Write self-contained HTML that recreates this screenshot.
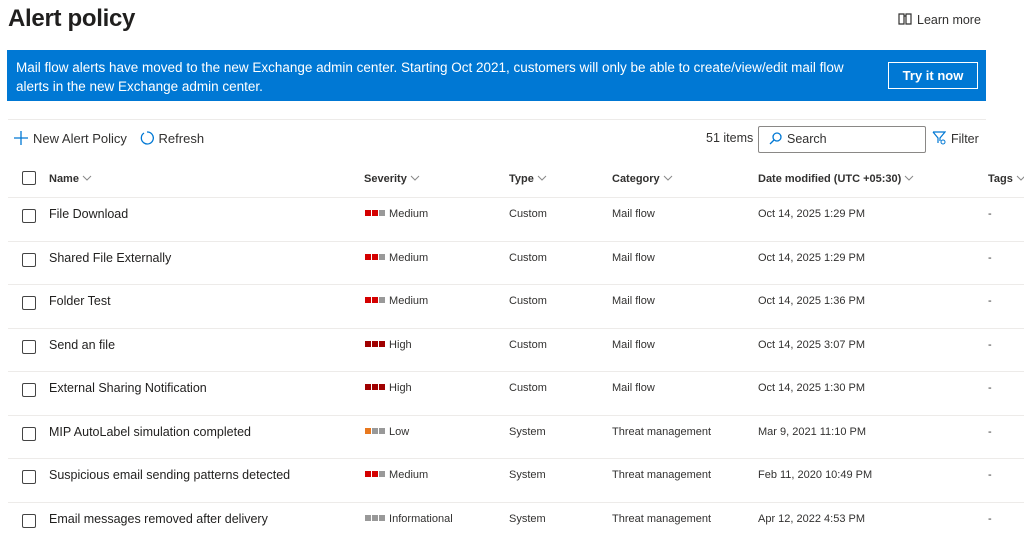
<!DOCTYPE html>
<html><head><meta charset="utf-8"><style>
body{margin:0;width:1024px;height:541px;overflow:hidden;background:#fff;font-family:"Liberation Sans",sans-serif;color:#323130;position:relative}
.a{position:absolute;white-space:nowrap}
h1{position:absolute;left:8px;top:5px;margin:0;font-size:24px;font-weight:bold;color:#201f1e;letter-spacing:-0.3px}
.banner{position:absolute;left:7px;top:50px;width:979px;height:51px;background:#0078d4;color:#fff;font-size:13.5px;line-height:19px}
.btn{position:absolute;left:881px;top:12px;width:90px;height:27px;border:1px solid #fff;box-sizing:border-box;font-weight:bold;font-size:13px;text-align:center;line-height:25px}
.cb{position:absolute;left:22px;width:12px;height:12px;border:1px solid #444;border-radius:2px}
.hd{font-size:11px;font-weight:bold;color:#323130}
.row{position:absolute;left:8px;right:0;height:1px;background:#edebe9}
.nm{font-size:12.5px;color:#201f1e}
.sm{font-size:11px;color:#323130}
.sq{display:inline-block;width:6px;height:6px;margin-right:1px;vertical-align:1px}
.chev{display:inline-block;margin-left:3px;vertical-align:1px}
</style></head><body>
<h1>Alert policy</h1>
<div class="a" style="left:898px;top:13px;font-size:12.5px;color:#323130">
<svg width="14" height="12" viewBox="0 0 14 12" style="vertical-align:-1px;margin-right:5px"><path d="M1 1h5v10H1zM8 1h5v10H8zM6 3h2" fill="none" stroke="#323130" stroke-width="1.2"/></svg>Learn more</div>
<div class="banner"><div style="position:absolute;left:9px;top:8px">Mail flow alerts have moved to the new Exchange admin center. Starting Oct 2021, customers will only be able to create/view/edit mail flow<br>alerts in the new Exchange admin center.</div><div class="btn">Try it now</div></div>
<div class="row" style="top:119px;right:38px"></div>
<div class="a" style="left:14px;top:131px;font-size:13px">
<svg width="14" height="14" viewBox="0 0 14 14" style="vertical-align:-2px;margin-right:5px"><path d="M7 0v14M0 7h14" stroke="#0078d4" stroke-width="1.3"/></svg>New Alert Policy
<svg width="14" height="14" viewBox="0 0 14 14" style="vertical-align:-2px;margin:0 5px 0 9px"><path d="M4 2A6 6 0 1 0 7 1" fill="none" stroke="#0078d4" stroke-width="1.3"/></svg>Refresh</div>
<div class="a" style="left:706px;top:131px;font-size:12.5px">51 items</div>
<div class="a" style="left:758px;top:126px;width:168px;height:27px;border:1px solid #8a8886;border-radius:2px;box-sizing:border-box;font-size:12.5px;line-height:25px;padding-left:10px">
<svg width="13" height="13" viewBox="0 0 13 13" style="vertical-align:-2px;margin-right:5px"><circle cx="8" cy="5" r="4" fill="none" stroke="#0078d4" stroke-width="1.3"/><path d="M5 8L1 12" stroke="#0078d4" stroke-width="1.3"/></svg>Search</div>
<div class="a" style="left:932px;top:131px;font-size:12.5px">
<svg width="14" height="14" viewBox="0 0 14 14" style="vertical-align:-2px;margin-right:5px"><path d="M1 1h12L8 7v3M6 12V7L1 1" fill="none" stroke="#0078d4" stroke-width="1.2"/><circle cx="11" cy="11" r="2" fill="none" stroke="#0078d4"/></svg>Filter</div>
<div class="cb" style="top:171px"></div>
<div class="a hd" style="left:49px;top:173px">Name<svg class="chev" width="10" height="6" viewBox="0 0 10 6"><path d="M1 1l4 4 4-4" fill="none" stroke="#888"/></svg></div>
<div class="a hd" style="left:364px;top:173px">Severity<svg class="chev" width="10" height="6" viewBox="0 0 10 6"><path d="M1 1l4 4 4-4" fill="none" stroke="#888"/></svg></div>
<div class="a hd" style="left:509px;top:173px">Type<svg class="chev" width="10" height="6" viewBox="0 0 10 6"><path d="M1 1l4 4 4-4" fill="none" stroke="#888"/></svg></div>
<div class="a hd" style="left:612px;top:173px">Category<svg class="chev" width="10" height="6" viewBox="0 0 10 6"><path d="M1 1l4 4 4-4" fill="none" stroke="#888"/></svg></div>
<div class="a hd" style="left:758px;top:173px">Date modified (UTC +05:30)<svg class="chev" width="10" height="6" viewBox="0 0 10 6"><path d="M1 1l4 4 4-4" fill="none" stroke="#888"/></svg></div>
<div class="a hd" style="left:988px;top:173px">Tags<svg class="chev" width="10" height="6" viewBox="0 0 10 6"><path d="M1 1l4 4 4-4" fill="none" stroke="#888"/></svg></div>
<div id="rows"></div>
<script>
var R=[["File Download","m","Medium","Custom","Mail flow","Oct 14, 2025 1:29 PM"],
["Shared File Externally","m","Medium","Custom","Mail flow","Oct 14, 2025 1:29 PM"],
["Folder Test","m","Medium","Custom","Mail flow","Oct 14, 2025 1:36 PM"],
["Send an file","h","High","Custom","Mail flow","Oct 14, 2025 3:07 PM"],
["External Sharing Notification","h","High","Custom","Mail flow","Oct 14, 2025 1:30 PM"],
["MIP AutoLabel simulation completed","l","Low","System","Threat management","Mar 9, 2021 11:10 PM"],
["Suspicious email sending patterns detected","m","Medium","System","Threat management","Feb 11, 2020 10:49 PM"],
["Email messages removed after delivery","i","Informational","System","Threat management","Apr 12, 2022 4:53 PM"]];
var C={m:["#d40000","#d40000","#999"],h:["#a00000","#a00000","#a00000"],l:["#e8781e","#999","#999"],i:["#999","#999","#999"]};
var h="";R.forEach(function(r,i){var y=215+i*43.5;
h+='<div class="row" style="top:'+(y-18)+'px"></div>';
h+='<div class="cb" style="top:'+(y-6)+'px"></div>';
h+='<div class="a nm" style="left:49px;top:'+(y-8)+'px">'+r[0]+'</div>';
h+='<div class="a sm" style="left:365px;top:'+(y-7)+'px">'+C[r[1]].map(function(c){return '<span class="sq" style="background:'+c+'"></span>'}).join('')+'&nbsp;'+r[2]+'</div>';
h+='<div class="a sm" style="left:509px;top:'+(y-7)+'px">'+r[3]+'</div>';
h+='<div class="a sm" style="left:612px;top:'+(y-7)+'px">'+r[4]+'</div>';
h+='<div class="a sm" style="left:758px;top:'+(y-7)+'px">'+r[5]+'</div>';
h+='<div class="a sm" style="left:988px;top:'+(y-7)+'px">-</div>';});
document.getElementById("rows").innerHTML=h;
</script>
</body></html>
